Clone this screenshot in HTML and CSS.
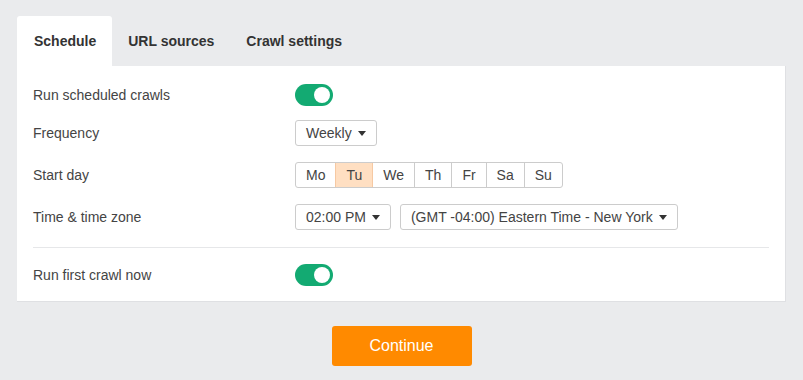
FILE: index.html
```html
<!DOCTYPE html>
<html lang="en">

<head>
  <meta charset="UTF-8">
  <meta name="viewport" content="width=device-width, initial-scale=1.0">
  <title>Crawl schedule</title>
  <link rel="stylesheet" href="styles.css">
</head>

<body>
  <div class="wrapper">
    <div class="tabs">
      <div class="tab active">Schedule</div>
      <div class="tab">URL sources</div>
      <div class="tab">Crawl settings</div>
    </div>

    <div class="panel">
      <!-- Scheduled crawls -->
      <div class="row row-first">
        <div class="label">Run scheduled crawls</div>
        <div class="toggle on"><span class="knob"></span></div>
      </div>

      <div class="row">
        <div class="label">Frequency</div>
        <div class="select">Weekly <span class="caret"></span></div>
      </div>

      <div class="row">
        <div class="label">Start day</div>
        <div class="days">
          <span class="day">Mo</span>
          <span class="day selected">Tu</span>
          <span class="day">We</span>
          <span class="day">Th</span>
          <span class="day">Fr</span>
          <span class="day">Sa</span>
          <span class="day">Su</span>
        </div>
      </div>

      <div class="row">
        <div class="label">Time &amp; time zone</div>
        <div class="controls">
          <div class="select">02:00 PM <span class="caret"></span></div>
          <div class="select">(GMT -04:00) Eastern Time - New York <span class="caret"></span></div>
        </div>
      </div>

      <div class="divider"></div>

      <div class="row row-last">
        <div class="label">Run first crawl now</div>
        <div class="toggle on"><span class="knob"></span></div>
      </div>
    </div>

    <div class="actions">
      <button class="button">Continue</button>
    </div>
  </div>
</body>

</html>
```

FILE: styles.css
```css
body {
  font-family: 'Liberation Sans', Arial, sans-serif;
  margin: 0;
  padding: 0;
  background-color: #eaebed;
  color: #444;
}

.wrapper {
  padding: 16px 17px;
}

.tabs {
  display: flex;
  height: 50px;
}

.tab {
  display: flex;
  align-items: center;
  padding: 0 16px;
  font-size: 14px;
  font-weight: bold;
  color: #333;
  border-radius: 3px 3px 0 0;
}

.tab.active {
  background-color: #ffffff;
  padding-left: 17px;
}

.panel {
  background-color: #ffffff;
  border-right: 1px solid #dfe0e3;
  border-bottom: 1px solid #dfe0e3;
  padding: 11px 16px 0 16px;
}

.row {
  display: flex;
  align-items: center;
  height: 42px;
  font-size: 14px;
}

.row-first {
  height: 35px;
}

.row-last {
  height: 53px;
}

.label {
  width: 262px;
}

.toggle {
  width: 38px;
  height: 22px;
  border-radius: 11px;
  background-color: #ccc;
  display: flex;
  align-items: center;
  box-sizing: border-box;
  padding: 0 3px;
}

.toggle.on {
  background-color: #13aa72;
  justify-content: flex-end;
}

.knob {
  width: 16px;
  height: 16px;
  border-radius: 50%;
  background-color: #ffffff;
}

.controls {
  display: flex;
  gap: 9px;
}

.select {
  display: flex;
  align-items: center;
  height: 26px;
  box-sizing: border-box;
  padding: 0 10px;
  border: 1px solid #cccccc;
  border-radius: 3px;
  color: #444;
  gap: 6px;
}

.caret {
  width: 0;
  height: 0;
  border-left: 4px solid transparent;
  border-right: 4px solid transparent;
  border-top: 5px solid #333;
}

.days {
  display: flex;
  border: 1px solid #cccccc;
  border-radius: 3px;
  height: 26px;
  box-sizing: border-box;
}

.day {
  display: flex;
  align-items: center;
  padding: 0 10px;
  border-left: 1px solid #cccccc;
  color: #444;
}

.day:first-child {
  border-left: none;
}

.day.selected {
  background-color: #ffdfc2;
  border-left-color: #f6c9a3;
}

.day.selected + .day {
  border-left-color: #f6c9a3;
}

.divider {
  height: 1px;
  background-color: #e6e7e9;
  margin-top: 9px;
}

.actions {
  display: flex;
  justify-content: center;
  padding-top: 24px;
}

.button {
  width: 140px;
  height: 40px;
  background-color: #ff8a00;
  color: #ffffff;
  border: none;
  border-radius: 3px;
  font-family: 'Liberation Sans', Arial, sans-serif;
  font-size: 16px;
  cursor: pointer;
}
```
